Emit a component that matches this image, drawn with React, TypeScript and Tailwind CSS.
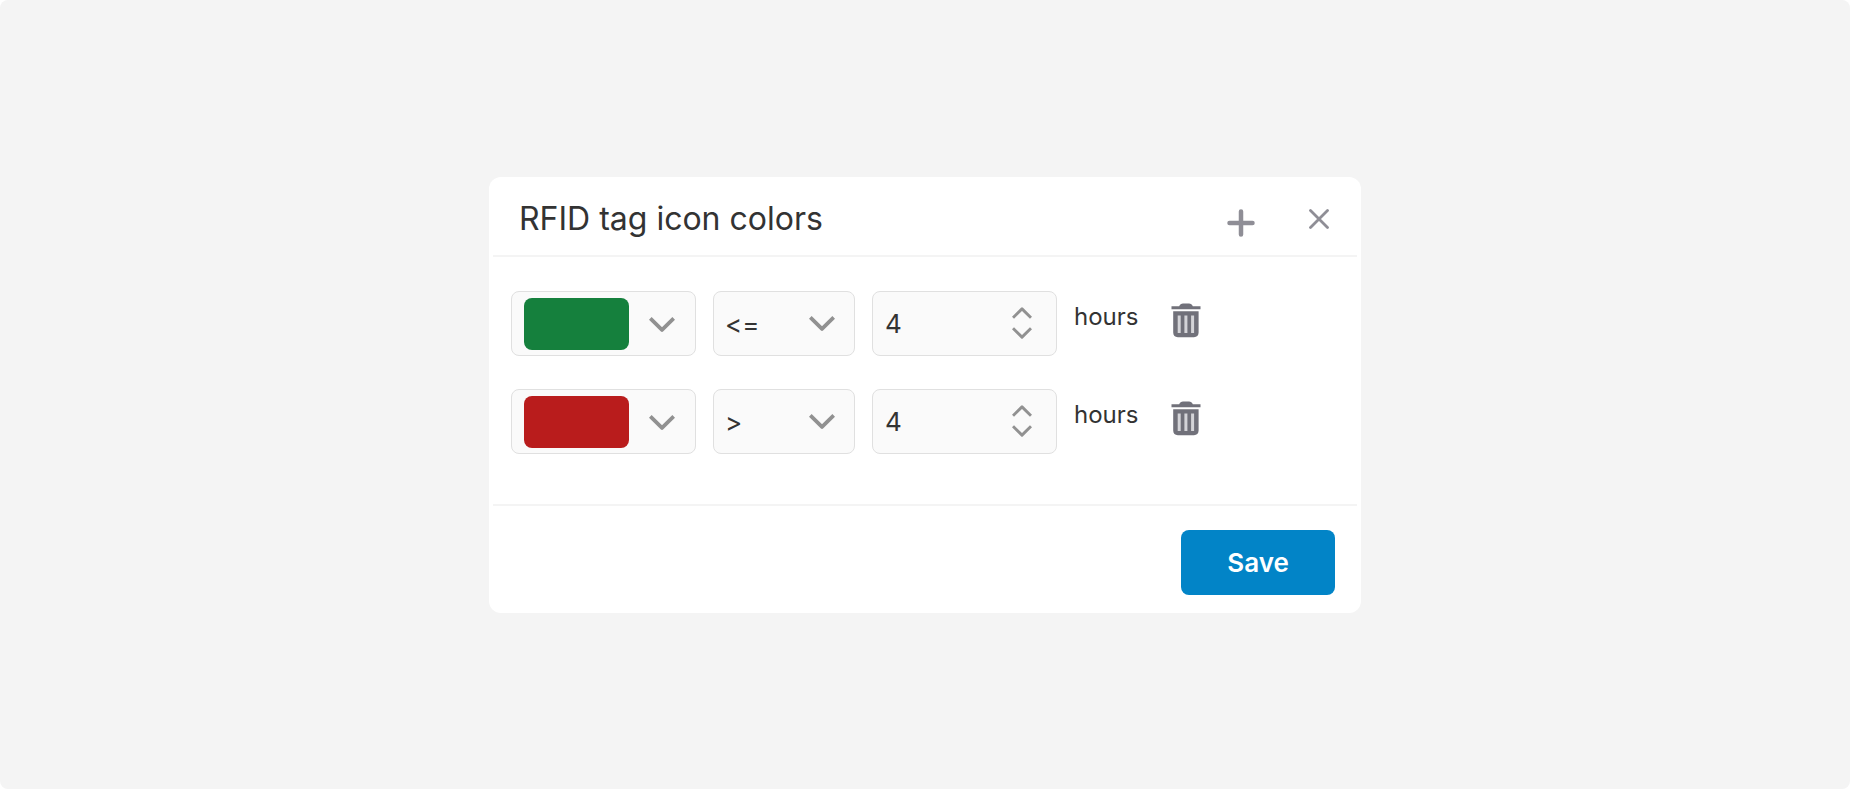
import { useState } from 'react';

interface Rule {
  id: number;
  color: string;
  operator: string;
  hours: number;
}

const COLORS = [
  { value: '#15803d', label: 'Green' },
  { value: '#b91c1c', label: 'Red' },
];

const OPERATORS = ['<', '<=', '>', '>='];

const initialRules: Rule[] = [
  { id: 1, color: '#15803d', operator: '<=', hours: 4 },
  { id: 2, color: '#b91c1c', operator: '>', hours: 4 },
];

function Chevron({ className }: { className: string }) {
  return (
    <svg className={className} viewBox="0 0 26 15" fill="none" stroke="#919191" aria-hidden="true">
      <path strokeWidth={3.8} strokeLinejoin="round" d="M1.3 1.4L13 12.900 24.700 1.400" />
    </svg>
  );
}

function TrashIcon() {
  return (
    <svg className="w-[30px] h-[35px]" viewBox="0 0 30 35" aria-hidden="true">
      <path
        fill="#71717a"
        d="M.5 3.200H8.200C9 1.400 10.200.5 12 .5h6c1.800 0 3 .9 3.800 2.700h7.700v3H.5z"
      />
      <path fill="#71717a" d="M2.200 8.200h25.400v21.400c0 3-1.800 4.600-4.600 4.600H6.800c-2.800 0-4.600-1.600-4.600-4.600z" />
      <path stroke="#d4d4d8" strokeWidth={3} d="M8.200 12.500v17.500M14.900 12.500v17.500M21.600 12.500v17.500" />
    </svg>
  );
}

export default function App() {
  const [rules, setRules] = useState<Rule[]>(initialRules);

  const updateRule = (id: number, patch: Partial<Rule>) => {
    setRules(rules.map((r) => (r.id === id ? { ...r, ...patch } : r)));
  };

  const addRule = () => {
    setRules([...rules, { id: Date.now(), color: '#15803d', operator: '<=', hours: 4 }]);
  };

  return (
    <div className="min-h-screen flex items-center justify-center rounded-lg bg-[#f4f4f4] p-4 font-['Inter',sans-serif] text-[#333333]">
      <form
        className="w-full max-w-[872px] rounded-xl bg-white px-1"
        onSubmit={(e) => e.preventDefault()}
      >
        {/* Header */}
        <header className="flex items-center border-b-2 border-[#f4f4f4] pl-[26px] pr-7 pt-[6px]">
          <h1 className="flex-1 text-[32px] leading-[72px]">RFID tag icon colors</h1>
          <button type="button" aria-label="Add rule" onClick={addRule} className="mt-2 p-2">
            <svg className="size-7" viewBox="0 0 28 28" fill="none" stroke="#8f8e96" aria-hidden="true">
              <path strokeWidth={4.5} strokeLinecap="round" d="M14 2.500v23M2.500 14h23" />
            </svg>
          </button>
          <button type="button" aria-label="Close" className="ml-[46px]">
            <svg className="size-5" viewBox="0 0 20 20" fill="none" stroke="#8f8e96" aria-hidden="true">
              <path strokeWidth={2.8} strokeLinecap="round" d="M1.500 1.500l17 17M18.500 1.500l-17 17" />
            </svg>
          </button>
        </header>

        {/* Rules */}
        <div className="flex flex-col gap-[33px] px-[18px] pt-[34px] pb-[50px]">
          {rules.map((rule) => (
            <div key={rule.id} className="flex gap-[17px]">
              <div className="relative flex items-center gap-5 w-[185px] h-[65px] rounded-lg border border-[#e0e0e0] bg-[#fafafa] pl-3 pt-0.5">
                <span
                  className="w-[105px] h-[52px] rounded-lg"
                  style={{ backgroundColor: rule.color }}
                />
                <Chevron className="w-[26px] h-[15px]" />
                <select
                  aria-label="Color"
                  value={rule.color}
                  onChange={(e) => updateRule(rule.id, { color: e.target.value })}
                  className="absolute inset-0 size-full opacity-0"
                >
                  {COLORS.map((c) => (
                    <option key={c.value} value={c.value}>{c.label}</option>
                  ))}
                </select>
              </div>

              <div className="relative flex items-center w-[142px] h-[65px]">
                <select
                  aria-label="Operator"
                  value={rule.operator}
                  onChange={(e) => updateRule(rule.id, { operator: e.target.value })}
                  className="size-full appearance-none rounded-lg border border-[#e0e0e0] bg-[#fafafa] pl-[11px] pt-0.5 text-[26px]"
                >
                  {OPERATORS.map((op) => (
                    <option key={op} value={op}>{op}</option>
                  ))}
                </select>
                <Chevron className="pointer-events-none absolute right-5 w-[26px] h-[15px]" />
              </div>

              <div className="flex items-center w-[185px] h-[65px] rounded-lg border border-[#e0e0e0] bg-[#fafafa] pl-3 pr-6">
                <input
                  type="number"
                  aria-label="Hours"
                  value={rule.hours}
                  onChange={(e) => updateRule(rule.id, { hours: Number(e.target.value) })}
                  className="min-w-0 flex-1 bg-transparent text-[26px] outline-none [appearance:textfield] [&::-webkit-inner-spin-button]:appearance-none"
                />
                <div className="flex flex-col gap-2">
                  <button
                    type="button"
                    aria-label="Increase"
                    onClick={() => updateRule(rule.id, { hours: rule.hours + 1 })}
                  >
                    <Chevron className="w-5 h-3 rotate-180" />
                  </button>
                  <button
                    type="button"
                    aria-label="Decrease"
                    onClick={() => updateRule(rule.id, { hours: rule.hours - 1 })}
                  >
                    <Chevron className="w-5 h-3" />
                  </button>
                </div>
              </div>

              <span className="pt-2 text-2xl leading-9">hours</span>

              <button
                type="button"
                aria-label="Delete rule"
                onClick={() => setRules(rules.filter((r) => r.id !== rule.id))}
                className="ml-4 mt-3 self-start"
              >
                <TrashIcon />
              </button>
            </div>
          ))}
        </div>

        {/* Footer */}
        <footer className="flex justify-end border-t-2 border-[#f4f4f4] px-[22px] pt-6 pb-[18px]">
          <button
            type="submit"
            className="w-[154px] h-[65px] rounded-lg bg-[#0284c7] text-[26px] font-semibold text-white"
          >
            Save
          </button>
        </footer>
      </form>
    </div>
  );
}
